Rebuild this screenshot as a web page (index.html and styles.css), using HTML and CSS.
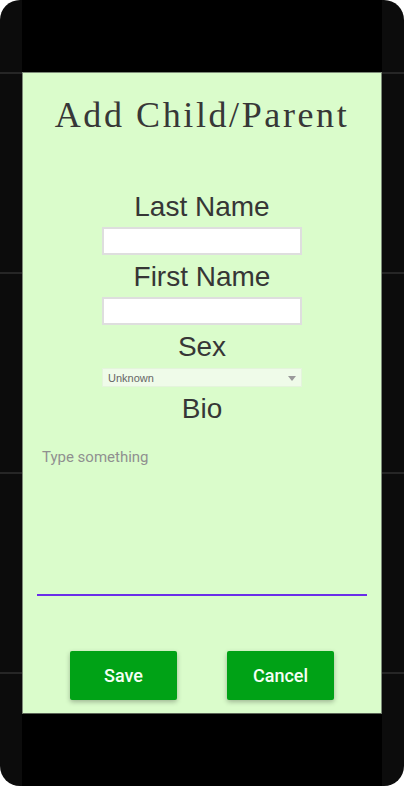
FILE: index.html
```html
<!DOCTYPE html>
<html>
<head>
<meta charset="utf-8">
<link rel="stylesheet" href="styles.css">
</head>
<body>
<div class="phone">
  <div class="screen">
    <div class="bar"></div>
    <div class="app">
      <h1 class="title">Add Child/Parent</h1>
      <div class="form">
        <div class="label">Last Name</div>
        <div class="input"></div>
        <div class="label">First Name</div>
        <div class="input"></div>
        <div class="label">Sex</div>
        <div class="select"><span>Unknown</span><span class="arrow"></span></div>
        <div class="label">Bio</div>
      </div>
      <div class="bio">
        <div class="placeholder">Type something</div>
      </div>
      <div class="buttons">
        <div class="btn">Save</div>
        <div class="btn">Cancel</div>
      </div>
    </div>
    <div class="bar"></div>
  </div>
</div>
</body>
</html>
```
FILE: styles.css
```css
html, body {
  margin: 0;
  padding: 0;
  background: #ffffff;
}
.phone {
  width: 404px;
  height: 786px;
  border-radius: 20px;
  overflow: hidden;
  background-color: #0c0c0c;
  background-image: repeating-linear-gradient(to bottom, transparent 0px, transparent 72px, #262626 72px, #262626 74px, transparent 74px, transparent 200px);
  padding: 0 22px;
  box-sizing: border-box;
  display: flex;
}
.screen {
  width: 360px;
  height: 786px;
  background: #000;
  display: flex;
  flex-direction: column;
}
.bar {
  height: 72px;
  flex: none;
}
.app {
  height: 640px;
  flex: none;
  background: #dafccb;
  border: 1px solid #7d8a78;
  border-bottom-color: #5a6356;
  display: flex;
  flex-direction: column;
  align-items: center;
}
.title {
  margin: 22px 0 0;
  font-family: "Liberation Serif", serif;
  font-weight: normal;
  font-size: 36px;
  line-height: 40px;
  letter-spacing: 2.6px;
  color: #373737;
}
.form {
  margin-top: 56px;
  display: flex;
  flex-direction: column;
  align-items: center;
}
.label {
  font-family: "Liberation Sans", Arial, sans-serif;
  font-size: 28px;
  line-height: 32px;
  color: #363636;
}
.input {
  width: 200px;
  height: 28px;
  box-sizing: border-box;
  background: #fff;
  border: 2px solid #dedede;
  margin: 4px 0 6px;
}
.select {
  width: 200px;
  height: 19px;
  box-sizing: border-box;
  background: #effbe9;
  border: 1px solid #e4f4dc;
  margin: 5px 0 6px;
  display: flex;
  align-items: center;
  justify-content: space-between;
  padding: 0 5px 0 5px;
  font-family: "Liberation Sans", Arial, sans-serif;
  font-size: 11px;
  color: #666;
}
.arrow {
  width: 0;
  height: 0;
  border-left: 4px solid transparent;
  border-right: 4px solid transparent;
  border-top: 5px solid #9a9a9a;
  margin-top: 1px;
}
.bio {
  width: 330px;
  height: 169px;
  margin-top: 2px;
  border-bottom: 2px solid #6a2de8;
  box-sizing: border-box;
  padding: 21px 5px 0;
}
.placeholder {
  font-family: Roboto, sans-serif;
  font-size: 15px;
  line-height: 18px;
  color: #909090;
}
.buttons {
  margin-top: 55px;
  width: 264px;
  display: flex;
  justify-content: space-between;
}
.btn {
  width: 107px;
  height: 49px;
  background: #00a216;
  border-radius: 2px;
  box-shadow: 0 2px 5px rgba(0, 0, 0, 0.28);
  color: #f4fff4;
  font-family: Roboto, sans-serif;
  font-weight: 500;
  font-size: 18px;
  display: flex;
  align-items: center;
  justify-content: center;
}
```
